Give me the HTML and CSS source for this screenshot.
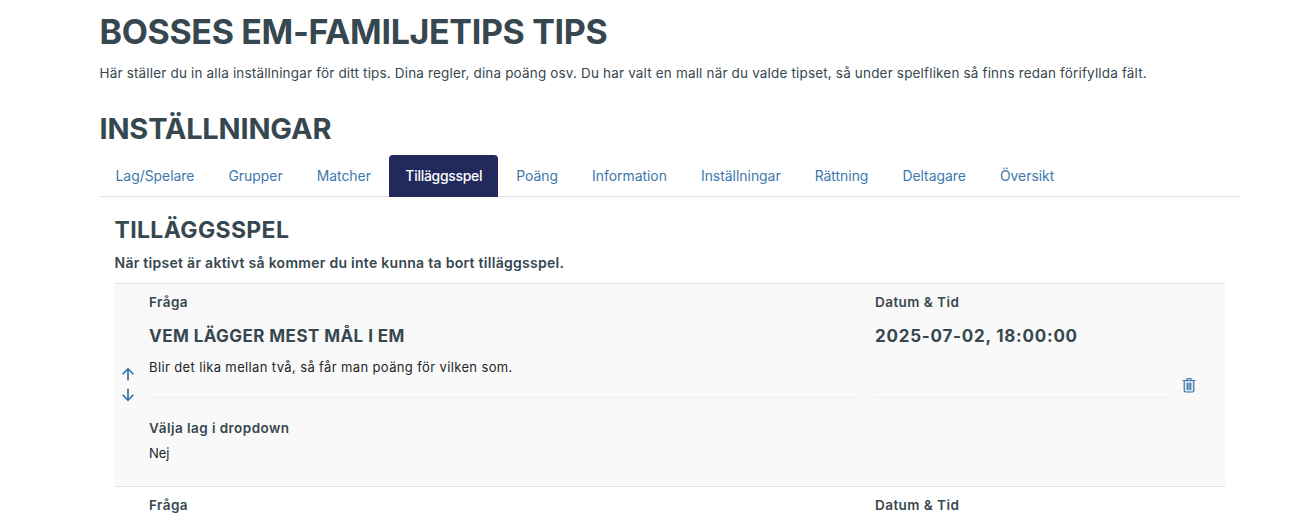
FILE: index.html
```html
<!DOCTYPE html>
<html lang="sv">
<head>
<meta charset="utf-8">
<title>Inställningar</title>
<link rel="stylesheet" href="styles.css">
</head>
<body>
<main class="page">
  <h1 class="title">BOSSES EM-FAMILJETIPS TIPS</h1>
  <p class="intro">Här ställer du in alla inställningar för ditt tips. Dina regler, dina poäng osv. Du har valt en mall när du valde tipset, så under spelfliken så finns redan förifyllda fält.</p>
  <h2 class="section-title">INSTÄLLNINGAR</h2>
  <nav class="tabs">
    <a class="tab">Lag/Spelare</a>
    <a class="tab">Grupper</a>
    <a class="tab">Matcher</a>
    <a class="tab active">Tilläggsspel</a>
    <a class="tab">Poäng</a>
    <a class="tab">Information</a>
    <a class="tab">Inställningar</a>
    <a class="tab">Rättning</a>
    <a class="tab">Deltagare</a>
    <a class="tab">Översikt</a>
  </nav>
  <section class="panel">
    <h3 class="panel-title">TILLÄGGSSPEL</h3>
    <p class="notice">När tipset är aktivt så kommer du inte kunna ta bort tilläggsspel.</p>
    <article class="row">
      <div class="arrows">
        <svg class="icon" viewBox="0 0 16 16" fill="none" stroke="currentColor" stroke-width="2" stroke-linecap="round" stroke-linejoin="round"><path d="M8 14.500V2M2.500 7.500 8 2l5.500 5.500"/></svg>
        <svg class="icon" viewBox="0 0 16 16" fill="none" stroke="currentColor" stroke-width="2" stroke-linecap="round" stroke-linejoin="round"><path d="M8 1.500V14M2.500 8.500 8 14l5.500-5.500"/></svg>
      </div>
      <div class="col-q">
        <div class="label">Fråga</div>
        <div class="value">VEM LÄGGER MEST MÅL I EM</div>
        <p class="desc">Blir det lika mellan två, så får man poäng för vilken som.</p>
        <div class="label dropdown-label">Välja lag i dropdown</div>
        <div class="plain">Nej</div>
      </div>
      <div class="col-d">
        <div class="label">Datum &amp; Tid</div>
        <div class="value date">2025-07-02, 18:00:00</div>
        <div class="desc-spacer"></div>
      </div>
      <div class="trash">
        <svg class="icon trash-icon" viewBox="0 0 14 16" fill="#dbe6f3" stroke="currentColor" stroke-width="1.200" stroke-linejoin="round" stroke-linecap="round"><path d="M1 3.500h12M5 3.500V1.500h4v2M2.200 3.500v10.300c0 .7.500 1.200 1.200 1.200h7.200c.7 0 1.200-.5 1.200-1.200V3.500zM5.300 6.200v6.200M7 6.200v6.200M8.700 6.200v6.200"/></svg>
      </div>
    </article>
    <article class="row next">
      <div class="arrows"></div>
      <div class="col-q"><div class="label">Fråga</div></div>
      <div class="col-d"><div class="label">Datum &amp; Tid</div></div>
      <div class="trash"></div>
    </article>
  </section>
</main>
</body>
</html>
```
FILE: styles.css
```css
* { box-sizing: border-box; }
html, body { margin: 0; height: 515px; overflow: hidden; background: #fff; }
body { font-family: Inter, "Liberation Sans", sans-serif; color: #37474f; }
.page { width: 1240px; padding-left: 99.500px; padding-top: 12px; }
.title { margin: 0; font-size: 34px; line-height: 40px; font-weight: 700; letter-spacing: -0.34px; }
.intro { margin: 10.500px 0 0; font-size: 13.500px; line-height: 20px; letter-spacing: 0.167px; }
.section-title { margin: 29.500px 0 0; font-size: 29px; line-height: 34px; font-weight: 700; letter-spacing: -0.2px; }
.tabs { display: flex; margin-top: 9px; height: 42px; border-bottom: 1px solid #dee2e6; gap: 2px; }
.tab { display: flex; align-items: center; padding: 0 16px; height: 42px; font-size: 13.900px; color: #3e77ab; border-radius: 4px 4px 0 0; }
.tab.active { background: #22295c; color: #fff; font-weight: 500; letter-spacing: -0.25px; margin-left: 0.500px; }
.panel { padding: 0 15px; }
.panel-title { margin: 19px 0 0; font-size: 23px; line-height: 28px; font-weight: 700; letter-spacing: 0.35px; }
.notice { margin: 9px 0 0; font-size: 14px; line-height: 20px; font-weight: 600; letter-spacing: 0.28px; color: #37474f; }
.row { display: flex; margin-top: 10px; height: 204px; background: #f9f9f9; border-top: 1px solid #dee2e6; border-bottom: 1px solid #dee2e6; }
.arrows { width: 34px; display: flex; flex-direction: column; align-items: center; justify-content: center; gap: 5px; color: #3e77ab; margin-left: -4px; margin-right: 4px; padding-bottom: 2px; }
.icon { width: 14px; height: 16px; display: block; }
.col-q { width: 711px; padding-top: 9px; padding-left: 0.500px; }
.col-d { width: 293px; margin-left: 15px; padding-top: 9px; padding-left: 0.500px; }
.label { font-size: 13.500px; line-height: 18px; font-weight: 600; letter-spacing: 0.45px; }
.value { margin-top: 13px; font-size: 17px; line-height: 24px; font-weight: 700; letter-spacing: 0.44px; }
.value.date { letter-spacing: 0.76px; }
.desc { margin: 9px 0 0; height: 41px; font-size: 13px; line-height: 20px; letter-spacing: 0.37px; color: #212529; border-bottom: 1px solid #eeeeee; }
.desc-spacer { margin-top: 9px; height: 41px; border-bottom: 1px solid #eeeeee; }
.dropdown-label { margin-top: 21px; }
.plain { margin-top: 6px; font-size: 13px; line-height: 20px; color: #212529; }
.trash { flex: 1; display: flex; align-items: center; justify-content: center; color: #3e77ab; padding-right: 14px; }
.next { background: #fff; border-bottom: 0; margin-top: -1px; }
```
